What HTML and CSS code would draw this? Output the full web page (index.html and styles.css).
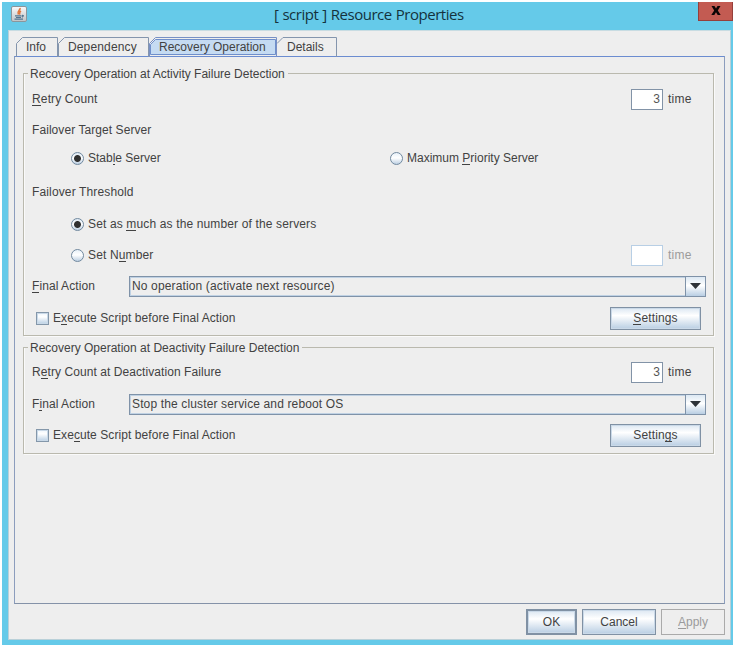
FILE: index.html
```html
<!DOCTYPE html>
<html lang="en">
<head>
<meta charset="utf-8">
<title>[ script ] Resource Properties</title>
<link rel="stylesheet" href="styles.css">
</head>
<body>
<div class="window">
  <header class="titlebar">
    <svg class="app-icon" viewBox="0 0 16 16" width="16" height="16">
      <defs><linearGradient id="ico" x1="0" y1="0" x2="0" y2="1"><stop offset="0" stop-color="#fafafa"/><stop offset="1" stop-color="#bfc3c6"/></linearGradient></defs>
      <rect x=".5" y=".5" width="15" height="15" rx="1.5" fill="url(#ico)" stroke="#8b969c"/>
      <path d="M9 2C10 4 5.500 5 7.300 8.500M10 5C7.500 6.500 9.500 7 8.300 8.500" fill="none" stroke="#e0763a" stroke-width="1.600"/>
      <path d="M4 9.800H10.500M5 11.500H10M3.500 13.200H12M11 9.500Q13.800 9.200 11 11.300" fill="none" stroke="#53758f" stroke-width="1.200"/>
    </svg>
    <h1 class="title">[ script ] Resource Properties</h1>
    <button class="close" aria-label="Close">
      <svg viewBox="0 0 10 9" width="10" height="9"><path d="M.5 0H3.500L5 2.600 6.500 0H9.500L6.800 4.400 9.700 9H6.700L5 6.200 3.300 9H.3L3.200 4.400Z" fill="#0c0505"/></svg>
    </button>
  </header>
  <main class="content">
    <nav class="tabs">
      <div class="tab tab-info"><svg viewBox="0 0 42 20" preserveAspectRatio="none"><path d="M.5 20V6.500L6.500 .5H41.500V20"/></svg><span>Info</span></div>
      <div class="tab tab-dep"><svg viewBox="0 0 91 20" preserveAspectRatio="none"><path d="M.5 20V6.500L6.500 .5H90.500V20"/></svg><span class="wide">Dependency</span></div>
      <div class="tab tab-rec selected"><svg viewBox="0 0 128 20" preserveAspectRatio="none"><path class="outer" d="M.5 20V6.500L6.500 .5H127.500V20"/><path class="inner" d="M1.500 17.500V7.500L6.500 2.500H126.500V17.500Z"/></svg><span>Recovery Operation</span></div>
      <div class="tab tab-det"><svg viewBox="0 0 60 20" preserveAspectRatio="none"><path d="M0 6.500L6 .5H59.500V20"/></svg><span>Details</span></div>
    </nav>
    <section class="panel">
      <fieldset class="group activity">
        <legend>Recovery Operation at Activity Failure Detection</legend>
        <div class="row r1"><span class="wide"><u>R</u>etry Count</span><span class="field">3</span><span class="unit">time</span></div>
        <div class="row r2"><span class="medium">Failover Target Server</span></div>
        <div class="row r3 options">
          <label class="option first"><i class="radio on"></i><span>Stab<u>l</u>e Server</span></label>
          <label class="option"><i class="radio"></i><span>Maximum <u>P</u>riority Server</span></label>
        </div>
        <div class="row r4"><span class="wide">Failover Threshold</span></div>
        <div class="row r5 options"><label class="option"><i class="radio on"></i><span class="wide">Set as <u>m</u>uch as the number of the servers</span></label></div>
        <div class="row r6 options"><label class="option"><i class="radio"></i><span class="wide">Set N<u>u</u>mber</span></label><span class="field disabled"></span><span class="unit dim">time</span></div>
        <div class="row r7"><span class="name medium"><u>F</u>inal Action</span><div class="combo"><span class="wide">No operation (activate next resource)</span><b><svg viewBox="0 0 11 6" width="11" height="6"><path d="M0 0H11L5.500 6Z"/></svg></b></div></div>
        <div class="row r8"><label class="check"><i class="box"></i><span class="medium">E<u>x</u>ecute Script before Final Action</span></label><button class="btn settings"><span class="wide"><u>S</u>ettings</span></button></div>
      </fieldset>
      <fieldset class="group deactivity">
        <legend>Recovery Operation at Deactivity Failure Detection</legend>
        <div class="row d1"><span class="medium">R<u>e</u>try Count at Deactivation Failure</span><span class="field">3</span><span class="unit">time</span></div>
        <div class="row d2"><span class="name medium">F<u>i</u>nal Action</span><div class="combo"><span class="wide">Stop the cluster service and reboot OS</span><b><svg viewBox="0 0 11 6" width="11" height="6"><path d="M0 0H11L5.500 6Z"/></svg></b></div></div>
        <div class="row d3"><label class="check"><i class="box"></i><span class="medium">Exe<u>c</u>ute Script before Final Action</span></label><button class="btn settings"><span class="wide">Settin<u>g</u>s</span></button></div>
      </fieldset>
    </section>
    <footer class="actions">
      <button class="btn ok">OK</button>
      <button class="btn cancel">Cancel</button>
      <button class="btn apply" disabled><span><u>A</u>pply</span></button>
    </footer>
  </main>
</div>
</body>
</html>
```
FILE: styles.css
```css
* { box-sizing: border-box; }
body { margin: 0; background: #fff; font: 12px/16px "Liberation Sans", Arial, sans-serif; color: #424242; overflow: hidden; }
.window { height: 643px; margin: 2px 0 0 2px; background: #65cae9; display: flex; flex-direction: column; }
.titlebar { height: 28px; display: flex; align-items: flex-start; }
.app-icon { margin: 4px 0 0 9px; }
.title { margin: 1px 0 0 247px; width: 191px; font: 15px/22px "Open Sans", sans-serif; color: #14323d; white-space: nowrap; letter-spacing: -.48px; word-spacing: .6px; }
.close { margin: 0 0 0 auto; width: 35px; height: 19px; border: 1px solid #963f3b; border-top: 0; background: #c35b52; padding: 0 0 2px; display: flex; align-items: center; justify-content: center; }
.content { width: 723px; height: 610px; margin-left: 6px; border: 1px solid #b9d0d8; border-top-color: #c8dce2; background: #eee; padding: 6px 4px 0 5px; }
.tabs { display: flex; height: 19px; padding-left: 2px; }
.tab { height: 19px; display: grid; align-items: center; }
.tab svg, .tab span { grid-area: 1 / 1; }
.tab svg { width: 100%; height: 20px; fill: none; stroke: #8495ad; align-self: start; }
.tab span { padding: 0 0 1px 10px; white-space: nowrap; }
.tab-info { width: 42px; }
.tab-dep { width: 91px; }
.tab-rec { width: 128px; }
.tab-det { width: 60px; }
.tab .outer { stroke: #7890c4; }
.tab .inner { fill: #c5dbf2; stroke: #6f8fcb; }
.wide { letter-spacing: .14px; }
.medium { letter-spacing: .07px; }
.panel { height: 548px; width: 711px; border: 1px solid #8c9dbd; border-top: 1px solid #6b8cd0; border-bottom-color: #8492a8; padding: 7px 10px 0 8px; }
.group { margin: 0; padding: 0; border: 1px solid #bab9ae; box-shadow: 1px 1px 0 #fafafa, inset 1px 0 0 #fafafa; min-width: 0; }
legend { margin-left: 4px; padding: 0 3px 0 2px; height: 18px; line-height: 20px; white-space: nowrap; }
.activity { height: 272px; }
.deactivity { height: 116px; margin-top: 2px; }
.row { display: flex; height: 22px; align-items: center; padding-left: 8px; white-space: nowrap; }
u { text-decoration: none; border-bottom: 1px solid currentColor; display: inline-block; height: 15px; line-height: 16px; vertical-align: top; }
.r1 { margin-top: 6px; }
.r2 { margin-top: 9px; }
.r3 { margin-top: 6px; }
.r4 { margin-top: 12px; }
.r5 { margin-top: 10px; }
.r6 { margin-top: 9px; }
.r7 { margin-top: 9px; }
.r8 { margin-top: 10px; }
.d1 { margin-top: 5px; }
.d2 { margin-top: 10px; }
.d3 { margin-top: 9px; }
.options { padding-left: 47px; }
.option { display: flex; align-items: center; }
.option.first { width: 319px; }
.radio { width: 13px; height: 13px; margin: 0 4px 0 0; border-radius: 50%; border: 1px solid #71899f; background: linear-gradient(#e7f0f8, #fff 45%, #bdd0e3); }
.radio.on { background: radial-gradient(circle, #303030 0 3px, transparent 3.900px), linear-gradient(#dce8f3, #fff 45%, #bdd0e3); }
.field { margin-left: auto; width: 32px; height: 21px; border: 1px solid #8293a7; background: #fff; text-align: right; padding: 1px 2px 0 0; color: #555; }
.field.disabled { border-color: #b8cfe5; }
.unit { width: 50px; padding-left: 5px; letter-spacing: .25px; }
.dim { color: #9b9b9b; }
.name { width: 97px; }
.combo { width: 577px; height: 21px; border: 1px solid #7f92a8; box-shadow: inset 1px 1px 0 #bfd1e3, inset 0 -1px 0 #bfd1e3; display: flex; align-items: center; padding-left: 2px; }
.combo span { flex: 1; }
.combo b { width: 20px; height: 19px; border-left: 1px solid #7f92a8; background: linear-gradient(#dce8f3, #fff 45%, #b9cee3); display: flex; align-items: center; justify-content: center; }
.combo path { fill: #2e3338; }
.check { display: flex; align-items: center; padding-left: 4px; }
.box { width: 13px; height: 13px; border: 1px solid #8497aa; margin-right: 4px; background: linear-gradient(#eef5fb, #fff 35%, #b9cfe4); box-shadow: inset 0 0 0 1px #c9d9e8; }
.btn { margin: 0; padding: 0; font: inherit; line-height: 16px; color: #424242; border: 1px solid #8091a4; background: linear-gradient(#dce7f2, #fff 36%, #f5f8fb 45%, #b9cee3); box-shadow: inset 0 0 0 1px #cad9e8; }
.settings { width: 91px; height: 23px; flex: none; margin-left: auto; margin-right: 12px; }
.actions { display: flex; justify-content: flex-end; gap: 5px; padding-top: 5px; margin-right: 1px; }
.actions .btn { height: 26px; }
.ok { width: 51px; border-width: 2px; }
.cancel { width: 74px; }
.apply { width: 64px; color: #9b9b9b; border-color: #aaa; background: #eee; box-shadow: none; }
```
